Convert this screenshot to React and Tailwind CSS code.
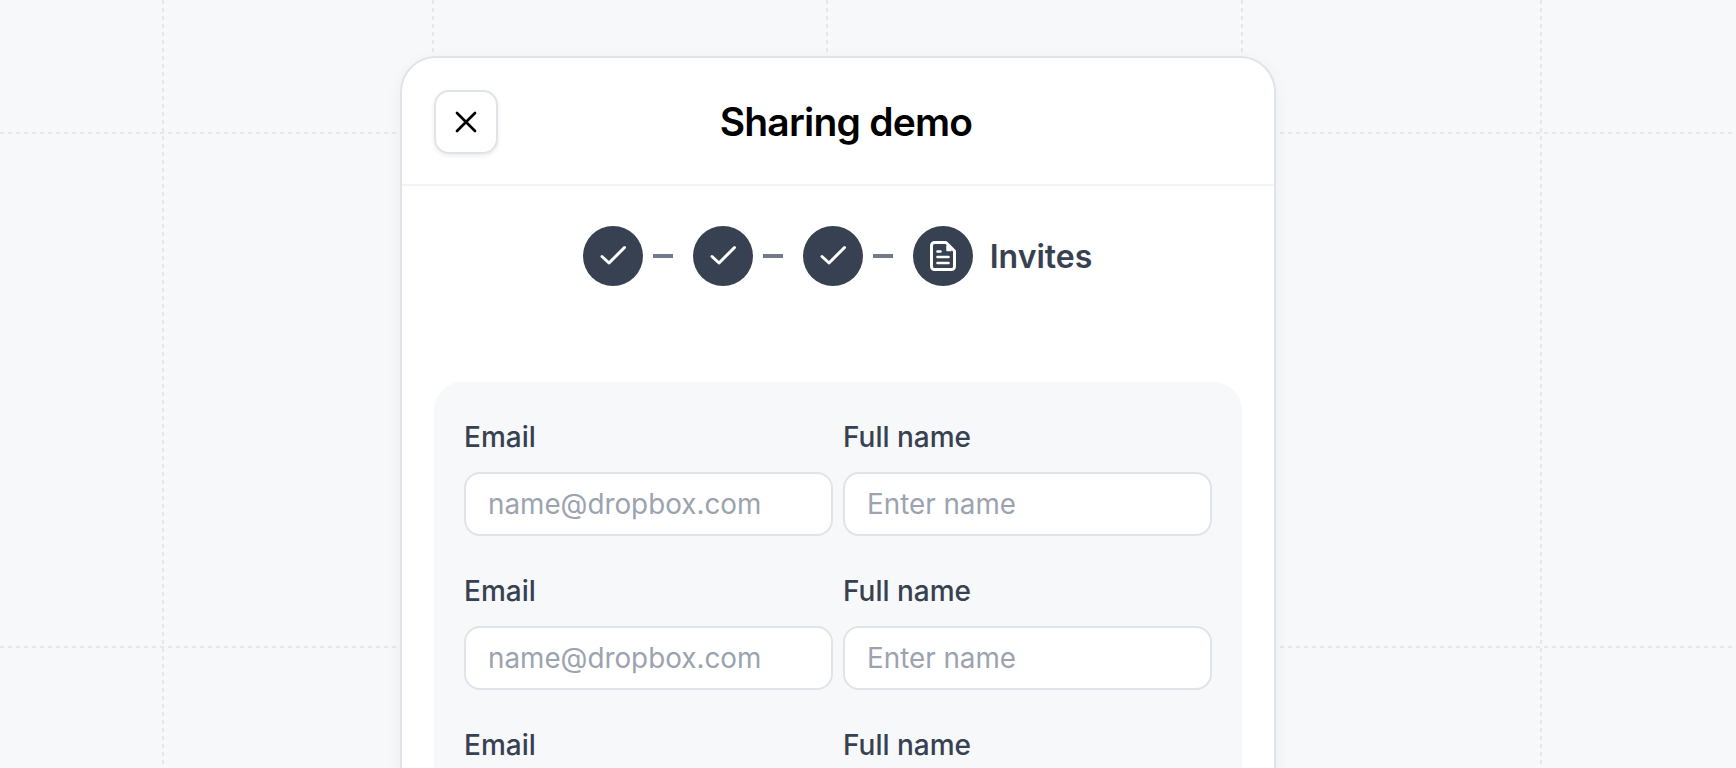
const inter = { fontFamily: "Inter, sans-serif" }

function CheckStep(){
  return (
    <div className="flex h-[60px] w-[60px] items-center justify-center rounded-full bg-[#374151]">
      <svg className="h-[28px] w-[28px]" viewBox="0 0 28 28" fill="none" stroke="white" strokeWidth="3" strokeLinecap="round" strokeLinejoin="round">
        <path d="M3 14.500L10 21L25.500 5.500" />
      </svg>
    </div>
  )
}

function Dash(){
  return <div className="mr-[20px] ml-[10px] h-[4px] w-[20px] bg-[#727a8b]" />
}

function Field({label, placeholder}){
  return (
    <div className="w-[368.500px]">
      <div className="text-[28px] leading-[36px] font-medium text-[#374151]">{label}</div>
      <input
        className="mt-[17px] block h-[63.500px] w-full rounded-[16px] border-2 border-[#e0e3e8] bg-white px-[22px] text-[27.800px] outline-none placeholder:text-[#9ca3af]"
        placeholder={placeholder}
        readOnly
      />
    </div>
  )
}

export default function App(){
  const rows = [0, 1, 2]
  return (
    <div className="relative h-[768px] w-[1736px] overflow-hidden bg-[#f7f8fa]" style={inter}>
      {/* dashed guide lines behind the card */}
      {[163, 433, 827, 1242, 1541].map((x) => (
        <div key={x} className="absolute top-0 bottom-0 w-[2px] bg-[repeating-linear-gradient(to_bottom,#e5e7eb_0,#e5e7eb_4px,transparent_4px,transparent_8px)]" style={{left: x - 1}} />
      ))}
      {[133, 647].map((y) => (
        <div key={y} className="absolute left-0 right-0 h-[2px] bg-[repeating-linear-gradient(to_right,#e5e7eb_0,#e5e7eb_4px,transparent_4px,transparent_8px)]" style={{top: y - 1}} />
      ))}

      <div className="relative mt-[56px] ml-[400px] h-[800px] w-[876px] rounded-t-[36px] border-2 border-[#e0e3e8] bg-white shadow-[0_4px_16px_rgba(17,24,39,0.05)]">
        <div className="flex h-[128px] items-center border-b-2 border-[#f3f4f6] pr-[80px] pl-[32px]">
          <button className="mt-[2px] flex h-[64px] w-[64px] items-center justify-center rounded-[15px] border-2 border-[#e0e3e8] bg-white shadow-[0_2px_4px_rgba(17,24,39,0.08)]">
            <svg className="h-[22px] w-[22px]" viewBox="0 0 22 22" fill="none" stroke="black" strokeWidth="2.7" strokeLinecap="round">
              <path d="M2 2l18 18M20 2L2 20" />
            </svg>
          </button>
          <h1 className="mt-[2px] flex-1 text-center text-[39px] font-semibold tracking-[-0.02em] text-black">Sharing demo</h1>
        </div>

        <div className="mt-[40px] flex items-center justify-center pr-[1px]">
          <CheckStep />
          <Dash />
          <CheckStep />
          <Dash />
          <CheckStep />
          <Dash />
          <div className="flex h-[60px] w-[60px] items-center justify-center rounded-full bg-[#374151]">
            <svg className="h-[30px] w-[26px]" viewBox="0 0 26 30" fill="none" stroke="white" strokeWidth="3" strokeLinecap="round" strokeLinejoin="round">
              <path d="M16 1.500H4.500A3 3 0 0 0 1.500 4.500v21a3 3 0 0 0 3 3h17a3 3 0 0 0 3-3V10z" />
              <path d="M17 5v4.500h4z" strokeWidth="1.500" fill="white" />
              <path d="M7.500 10.500h3M7.500 16h11M7.500 22h11" strokeWidth="2.600" />
            </svg>
          </div>
          <span className="mt-[2px] ml-[17px] text-[32px] font-semibold text-[#374151]">Invites</span>
        </div>

        <div className="mx-[32px] mt-[96px] flex h-[600px] flex-col gap-[37.500px] rounded-t-[28px] bg-[#f7f8fa] px-[30px] pt-[37px]">
          {rows.map((row) => (
            <div key={row} className="flex gap-[10.500px]">
              <Field label="Email" placeholder="name@dropbox.com" />
              <Field label="Full name" placeholder="Enter name" />
            </div>
          ))}
        </div>
      </div>
    </div>
  )
}
